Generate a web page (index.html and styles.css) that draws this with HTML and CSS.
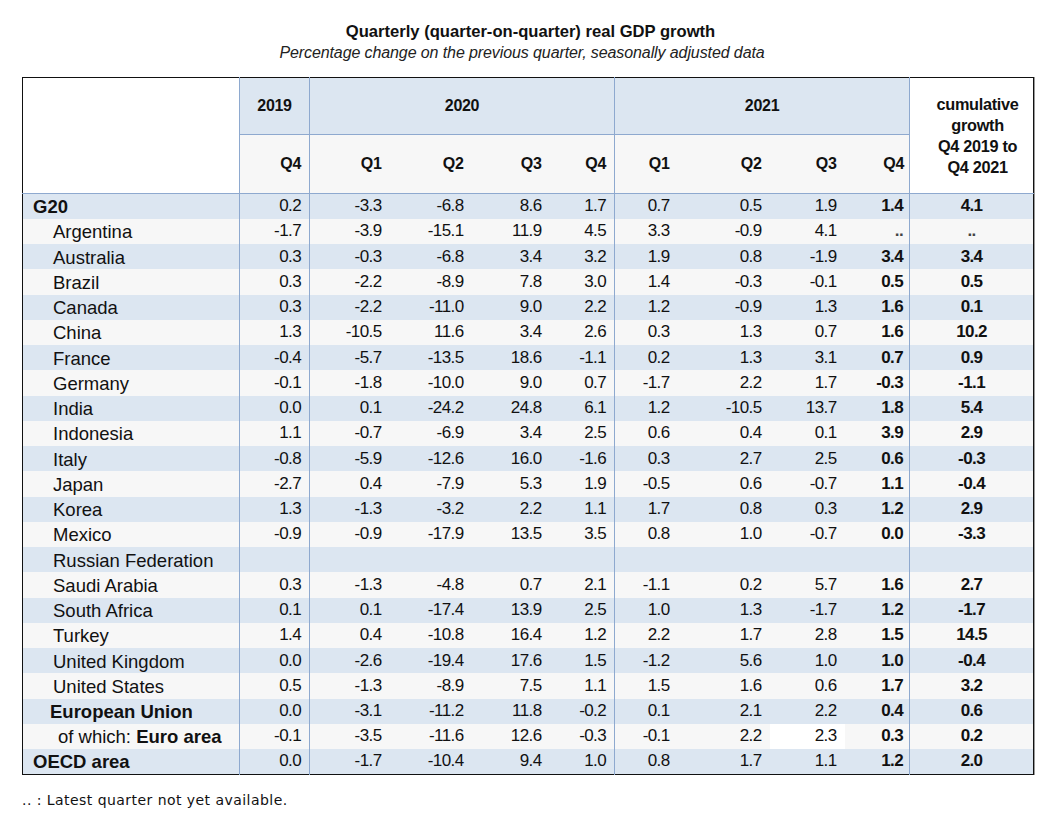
FILE: index.html
```html
<!DOCTYPE html>
<html>
<head>
<meta charset="utf-8">
<link rel="stylesheet" href="styles.css">
</head>
<body>
<div class="page">
  <div class="title">Quarterly (quarter-on-quarter) real GDP growth</div>
  <div class="subtitle">Percentage change on the previous quarter, seasonally adjusted data</div>
  <table class="gdp">
    <colgroup>
      <col class="c-label"><col class="c-19">
      <col class="c-20a"><col class="c-20b"><col class="c-20c"><col class="c-20d">
      <col class="c-21a"><col class="c-21b"><col class="c-21c"><col class="c-21d">
      <col class="c-cum">
    </colgroup>
    <thead>
      <tr class="h1">
        <th class="blank" rowspan="2"></th>
        <th class="year sep">2019</th>
        <th class="year sep" colspan="4">2020</th>
        <th class="year sep" colspan="4">2021</th>
        <th class="cum sep" rowspan="2">cumulative<br>growth<br>Q4 2019 to<br>Q4 2021</th>
      </tr>
      <tr class="h2">
        <th class="q sep">Q4</th>
        <th class="q sep">Q1</th><th class="q">Q2</th><th class="q">Q3</th><th class="q">Q4</th>
        <th class="q sep">Q1</th><th class="q">Q2</th><th class="q">Q3</th><th class="q last">Q4</th>
      </tr>
    </thead>
    <tbody>
      <tr class="b"><td class="lab l0 bold">G20</td><td class="sep">0.2</td><td class="sep">-3.3</td><td>-6.8</td><td>8.6</td><td>1.7</td><td class="sep">0.7</td><td>0.5</td><td>1.9</td><td class="bold last">1.4</td><td class="cumv sep">4.1</td></tr>
      <tr class="w"><td class="lab l1">Argentina</td><td class="sep">-1.7</td><td class="sep">-3.9</td><td>-15.1</td><td>11.9</td><td>4.5</td><td class="sep">3.3</td><td>-0.9</td><td>4.1</td><td class="bold last na">..</td><td class="cumv sep na">..</td></tr>
      <tr class="b"><td class="lab l1">Australia</td><td class="sep">0.3</td><td class="sep">-0.3</td><td>-6.8</td><td>3.4</td><td>3.2</td><td class="sep">1.9</td><td>0.8</td><td>-1.9</td><td class="bold last">3.4</td><td class="cumv sep">3.4</td></tr>
      <tr class="w"><td class="lab l1">Brazil</td><td class="sep">0.3</td><td class="sep">-2.2</td><td>-8.9</td><td>7.8</td><td>3.0</td><td class="sep">1.4</td><td>-0.3</td><td>-0.1</td><td class="bold last">0.5</td><td class="cumv sep">0.5</td></tr>
      <tr class="b"><td class="lab l1">Canada</td><td class="sep">0.3</td><td class="sep">-2.2</td><td>-11.0</td><td>9.0</td><td>2.2</td><td class="sep">1.2</td><td>-0.9</td><td>1.3</td><td class="bold last">1.6</td><td class="cumv sep">0.1</td></tr>
      <tr class="w"><td class="lab l1">China</td><td class="sep">1.3</td><td class="sep">-10.5</td><td>11.6</td><td>3.4</td><td>2.6</td><td class="sep">0.3</td><td>1.3</td><td>0.7</td><td class="bold last">1.6</td><td class="cumv sep">10.2</td></tr>
      <tr class="b"><td class="lab l1">France</td><td class="sep">-0.4</td><td class="sep">-5.7</td><td>-13.5</td><td>18.6</td><td>-1.1</td><td class="sep">0.2</td><td>1.3</td><td>3.1</td><td class="bold last">0.7</td><td class="cumv sep">0.9</td></tr>
      <tr class="w"><td class="lab l1">Germany</td><td class="sep">-0.1</td><td class="sep">-1.8</td><td>-10.0</td><td>9.0</td><td>0.7</td><td class="sep">-1.7</td><td>2.2</td><td>1.7</td><td class="bold last">-0.3</td><td class="cumv sep">-1.1</td></tr>
      <tr class="b"><td class="lab l1">India</td><td class="sep">0.0</td><td class="sep">0.1</td><td>-24.2</td><td>24.8</td><td>6.1</td><td class="sep">1.2</td><td>-10.5</td><td>13.7</td><td class="bold last">1.8</td><td class="cumv sep">5.4</td></tr>
      <tr class="w"><td class="lab l1">Indonesia</td><td class="sep">1.1</td><td class="sep">-0.7</td><td>-6.9</td><td>3.4</td><td>2.5</td><td class="sep">0.6</td><td>0.4</td><td>0.1</td><td class="bold last">3.9</td><td class="cumv sep">2.9</td></tr>
      <tr class="b"><td class="lab l1">Italy</td><td class="sep">-0.8</td><td class="sep">-5.9</td><td>-12.6</td><td>16.0</td><td>-1.6</td><td class="sep">0.3</td><td>2.7</td><td>2.5</td><td class="bold last">0.6</td><td class="cumv sep">-0.3</td></tr>
      <tr class="w"><td class="lab l1">Japan</td><td class="sep">-2.7</td><td class="sep">0.4</td><td>-7.9</td><td>5.3</td><td>1.9</td><td class="sep">-0.5</td><td>0.6</td><td>-0.7</td><td class="bold last">1.1</td><td class="cumv sep">-0.4</td></tr>
      <tr class="b"><td class="lab l1">Korea</td><td class="sep">1.3</td><td class="sep">-1.3</td><td>-3.2</td><td>2.2</td><td>1.1</td><td class="sep">1.7</td><td>0.8</td><td>0.3</td><td class="bold last">1.2</td><td class="cumv sep">2.9</td></tr>
      <tr class="w"><td class="lab l1">Mexico</td><td class="sep">-0.9</td><td class="sep">-0.9</td><td>-17.9</td><td>13.5</td><td>3.5</td><td class="sep">0.8</td><td>1.0</td><td>-0.7</td><td class="bold last">0.0</td><td class="cumv sep">-3.3</td></tr>
      <tr class="b"><td class="lab l1">Russian Federation</td><td class="sep"></td><td class="sep"></td><td></td><td></td><td></td><td class="sep"></td><td></td><td></td><td class="bold last"></td><td class="cumv sep"></td></tr>
      <tr class="w"><td class="lab l1">Saudi Arabia</td><td class="sep">0.3</td><td class="sep">-1.3</td><td>-4.8</td><td>0.7</td><td>2.1</td><td class="sep">-1.1</td><td>0.2</td><td>5.7</td><td class="bold last">1.6</td><td class="cumv sep">2.7</td></tr>
      <tr class="b"><td class="lab l1">South Africa</td><td class="sep">0.1</td><td class="sep">0.1</td><td>-17.4</td><td>13.9</td><td>2.5</td><td class="sep">1.0</td><td>1.3</td><td>-1.7</td><td class="bold last">1.2</td><td class="cumv sep">-1.7</td></tr>
      <tr class="w"><td class="lab l1">Turkey</td><td class="sep">1.4</td><td class="sep">0.4</td><td>-10.8</td><td>16.4</td><td>1.2</td><td class="sep">2.2</td><td>1.7</td><td>2.8</td><td class="bold last">1.5</td><td class="cumv sep">14.5</td></tr>
      <tr class="b"><td class="lab l1">United Kingdom</td><td class="sep">0.0</td><td class="sep">-2.6</td><td>-19.4</td><td>17.6</td><td>1.5</td><td class="sep">-1.2</td><td>5.6</td><td>1.0</td><td class="bold last">1.0</td><td class="cumv sep">-0.4</td></tr>
      <tr class="w"><td class="lab l1">United States</td><td class="sep">0.5</td><td class="sep">-1.3</td><td>-8.9</td><td>7.5</td><td>1.1</td><td class="sep">1.5</td><td>1.6</td><td>0.6</td><td class="bold last">1.7</td><td class="cumv sep">3.2</td></tr>
      <tr class="b"><td class="lab l2 bold">European Union</td><td class="sep">0.0</td><td class="sep">-3.1</td><td>-11.2</td><td>11.8</td><td>-0.2</td><td class="sep">0.1</td><td>2.1</td><td>2.2</td><td class="bold last">0.4</td><td class="cumv sep">0.6</td></tr>
      <tr class="w"><td class="lab l3">of which: <b>Euro area</b></td><td class="sep">-0.1</td><td class="sep">-3.5</td><td>-11.6</td><td>12.6</td><td>-0.3</td><td class="sep">-0.1</td><td>2.2</td><td class="white">2.3</td><td class="bold last">0.3</td><td class="cumv sep">0.2</td></tr>
      <tr class="b"><td class="lab l0 bold">OECD area</td><td class="sep">0.0</td><td class="sep">-1.7</td><td>-10.4</td><td>9.4</td><td>1.0</td><td class="sep">0.8</td><td>1.7</td><td>1.1</td><td class="bold last">1.2</td><td class="cumv sep">2.0</td></tr>
    </tbody>
  </table>
  <div class="note">.. : Latest quarter not yet available.</div>
</div>
</body>
</html>
```
FILE: styles.css
```css
html, body {
  margin: 0;
  padding: 0;
  background: #ffffff;
}
.page {
  width: 1061px;
  padding-top: 22px;
  font-family: "Liberation Sans", Arial, sans-serif;
  color: #111;
}
.title {
  text-align: center;
  font-weight: bold;
  font-size: 16.6px;
  line-height: 20px;
}
.subtitle {
  text-align: center;
  font-style: italic;
  font-size: 16px;
  letter-spacing: -0.1px;
  line-height: 21px;
  color: #222;
  padding-right: 17px;
}
.gdp {
  margin: 14px 0 0 22px;
  width: 1011px;
  table-layout: fixed;
  border-collapse: collapse;
  border: 1px solid #111;
  box-shadow: 1px 0 0 #999;
}
.c-label { width: 217px; }
.c-19 { width: 70px; }
.c-20a { width: 80px; }
.c-20b { width: 82px; }
.c-20c { width: 78px; }
.c-20d { width: 65px; }
.c-21a { width: 63px; }
.c-21b { width: 92px; }
.c-21c { width: 75px; }
.c-21d { width: 65px; }
.c-cum { width: 124px; }

.gdp th {
  font-weight: bold;
  font-size: 16px;
  letter-spacing: -0.3px;
  padding: 0 8px 0 0;
}
.h1 { height: 57px; }
.h2 { height: 59px; }
.blank {
  background: #ffffff;
  border-bottom: 1px solid #8ea9cf;
}
.year {
  background: #dce6f1;
  text-align: center;
  padding: 0 !important;
  border-bottom: 1px solid #8ea9cf;
}
.q {
  background: #f7f7f7;
  text-align: right;
  border-bottom: 1px solid #8ea9cf;
}
.gdp th.cum {
  background: #ffffff;
  text-align: center;
  padding: 0 0 0 12px;
  line-height: 21px;
  font-size: 16.3px;
  border-bottom: 1px solid #8ea9cf;
}
.sep { border-left: 1px solid #8ea9cf; }
.gdp th.last { padding-right: 5px; }

.gdp tbody tr { height: 25.25px; }
.gdp td {
  font-size: 17px;
  letter-spacing: -0.6px;
  text-align: right;
  padding: 0 8px 0 0;
  line-height: 20px;
  white-space: nowrap;
  overflow: hidden;
}
.gdp td.last { padding-right: 6px; }
.gdp tr.b td { background: #dce6f1; }
.gdp tr.w td { background: #f7f7f7; }
.gdp tr.w td.white { background: #ffffff; }
.gdp td.lab {
  text-align: left;
  padding: 2px 0 0 0;
  font-size: 18.5px;
  letter-spacing: 0;
}
.l0 { text-indent: 10px; }
.l1 { text-indent: 30px; }
.l2 { text-indent: 27px; }
.l3 { text-indent: 35px; }
.bold { font-weight: bold; }
.gdp td.cumv {
  text-align: center;
  padding: 0;
  font-weight: bold;
}
.gdp td.na { color: #444; }
.note {
  margin: 17px 0 0 22px;
  font-family: "DejaVu Sans", Verdana, sans-serif;
  font-size: 14px;
  letter-spacing: 0.45px;
  color: #111;
}
```
